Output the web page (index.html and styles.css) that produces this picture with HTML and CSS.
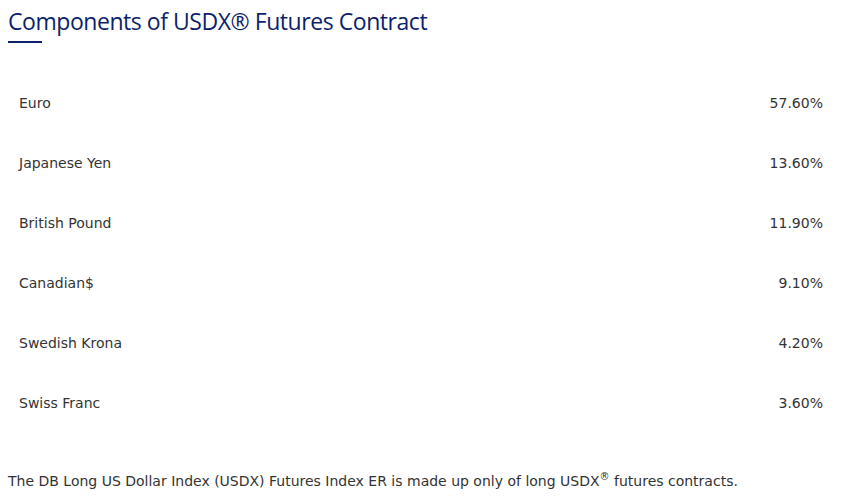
FILE: index.html
```html
<!DOCTYPE html>
<html>
<head>
<meta charset="utf-8">
<link rel="stylesheet" href="styles.css">
</head>
<body>
<div class="page">
  <h2 class="title">Components of USDX® Futures Contract</h2>
  <div class="rule"></div>
  <div class="table">
    <div class="row"><span>Euro</span><span>57.60%</span></div>
    <div class="row"><span>Japanese Yen</span><span>13.60%</span></div>
    <div class="row"><span>British Pound</span><span>11.90%</span></div>
    <div class="row"><span>Canadian$</span><span>9.10%</span></div>
    <div class="row"><span>Swedish Krona</span><span>4.20%</span></div>
    <div class="row"><span>Swiss Franc</span><span>3.60%</span></div>
  </div>
  <p class="note">The DB Long US Dollar Index (USDX) Futures Index ER is made up only of long USDX<sup>®</sup> futures contracts.</p>
</div>
</body>
</html>
```
FILE: styles.css
```css
html, body { margin: 0; padding: 0; background: #fff; }
.page { padding: 0 8px; color: #333; font-family: "DejaVu Sans", Verdana, sans-serif; font-size: 14px; }
.title { margin: 0; padding-top: 6px; font-family: "Open Sans", "Noto Sans", sans-serif; font-weight: 500; font-size: 23px; line-height: 30px; color: #0b1f6b; letter-spacing: -0.45px; }
.rule { width: 34px; height: 2px; background: #0b1f6b; margin-top: 5px; }
.table { margin-top: 50px; padding: 0 14px 0 11px; }
.row { display: flex; justify-content: space-between; height: 60px; line-height: 20px; }
.note { margin: 18px 0 0; line-height: 20px; }
.note sup { font-size: 10px; line-height: 0; vertical-align: 6px; }
```
